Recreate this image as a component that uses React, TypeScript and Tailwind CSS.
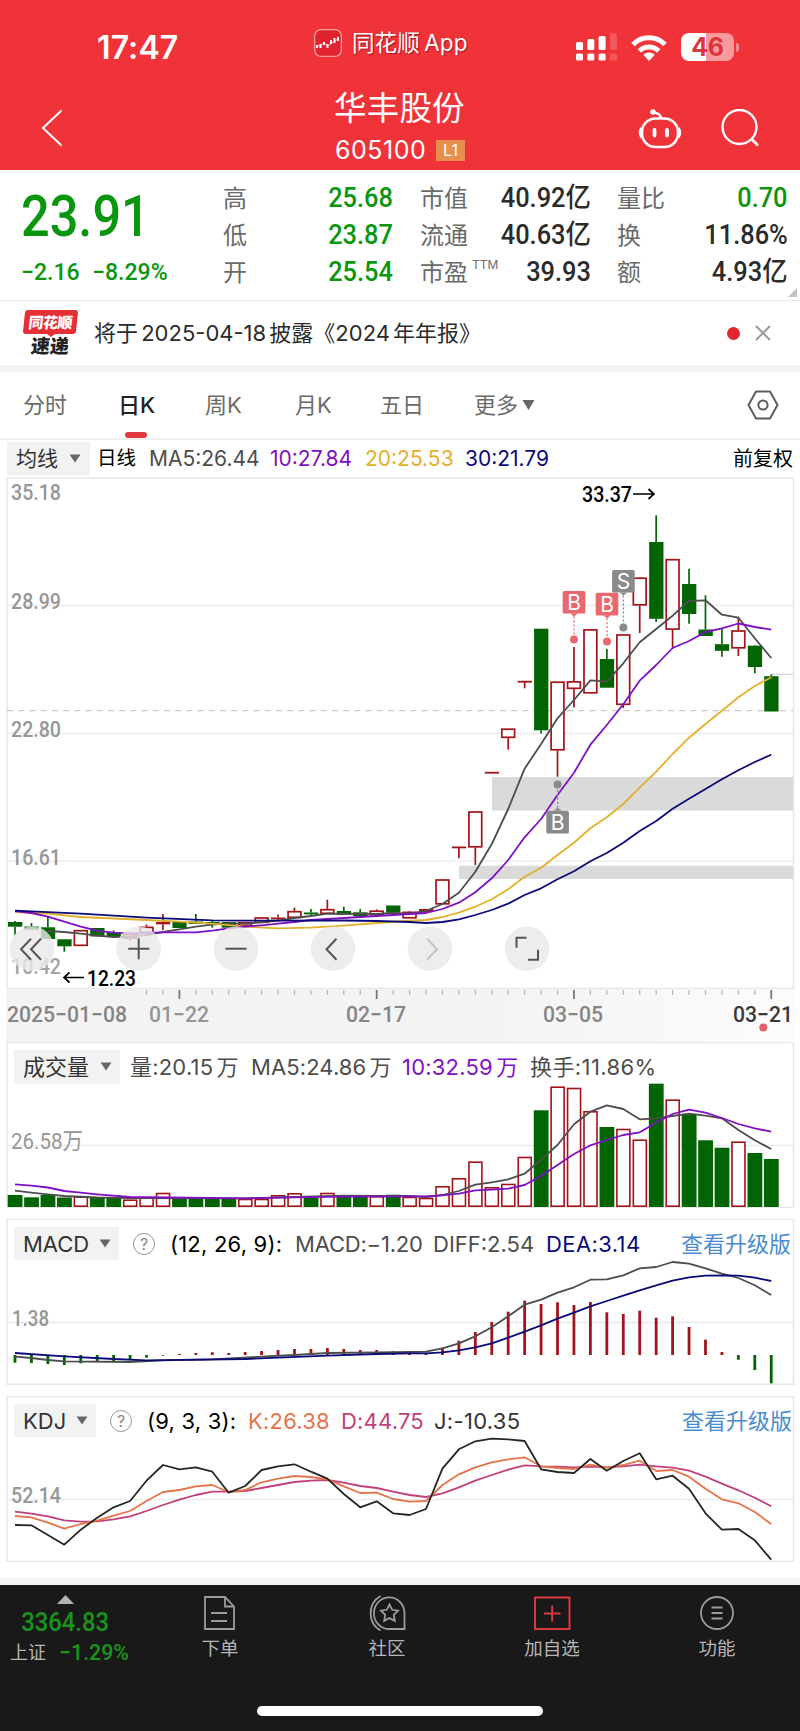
import type { ReactNode } from 'react';

// One slot per trading day, 47 days from 2025-01-08 to 03-21
const STEP = 16.44;
const dayX = (i: number) => 15 + i * STEP;

const RED = '#a3131a';
const GREEN = '#026402';
const MA5 = '#4d4d4d';
const MA10 = '#8010c4';
const MA20 = '#e3b02c';
const MA30 = '#0a0a78';

// [up, bodyTop, bodyBottom, high, low]
type Candle = [boolean, number, number, number, number];

const candles: Candle[] = [
  [false, 922, 926.7, 921, 934.7],
  [false, 926.5, 929.7, 923, 929.7],
  [false, 927.3, 939, 917, 939],
  [false, 939.3, 946.3, 939, 951.7],
  [true, 930, 946, 930, 946],
  [false, 928, 936.5, 928, 936.5],
  [false, 932, 936, 930.5, 937],
  [true, 934, 938.7, 932, 941],
  [true, 926.7, 933, 924.5, 933],
  [true, 922, 924.3, 914, 930],
  [false, 922, 928, 922, 928],
  [false, 921.5, 924, 914, 924],
  [false, 922, 924.3, 921, 927.7],
  [false, 922, 927.7, 922, 927.7],
  [true, 922, 926, 922, 926],
  [true, 917.3, 923, 917.3, 923],
  [true, 917.5, 919.3, 914.5, 921.5],
  [true, 911, 918, 907.5, 918],
  [false, 912.5, 914.3, 909, 916.3],
  [true, 909, 914, 899.7, 914],
  [false, 911, 914.7, 906.7, 915],
  [false, 912.3, 916.3, 909, 916.3],
  [true, 910.5, 915.5, 909.3, 916],
  [false, 905.5, 912.7, 905.5, 912.7],
  [true, 911.7, 918.5, 911, 918.5],
  [true, 909, 912, 909, 912],
  [true, 879.3, 904.5, 879.3, 904.5],
  [true, 846.5, 847.5, 846.5, 858.3],
  [true, 811.3, 847.5, 811.3, 865],
  [true, 771.8, 772.8, 771.8, 772.8],
  [true, 728.5, 738, 728.5, 749.7],
  [true, 680.8, 681.8, 680.8, 688.3],
  [false, 628.7, 730.3, 628.7, 733.5],
  [true, 681.5, 750.5, 681.5, 776.7],
  [true, 681.2, 689, 647, 707.5],
  [true, 629.2, 693.5, 629.2, 693.5],
  [false, 659, 687.7, 649, 687.7],
  [true, 634.3, 705, 634.3, 708],
  [true, 577.5, 605.5, 577.5, 633],
  [false, 542, 618.8, 515.3, 622],
  [true, 559, 629.8, 559, 648],
  [false, 584, 614, 568.7, 623.7],
  [false, 629.5, 636, 595.3, 636],
  [false, 644.2, 650.8, 628.3, 656.7],
  [true, 630.3, 648.5, 616.7, 656],
  [false, 645.7, 667, 645, 673.3],
  [false, 676.2, 711.5, 674.3, 711.5],
];

const volumeTops = [
  1195, 1197.3, 1195, 1197.5, 1196.7, 1198, 1197.5, 1199.7, 1197.7, 1193, 1198, 1198, 1198, 1198, 1199, 1199,
  1195.3, 1193.3, 1198, 1193, 1195, 1196, 1196.3, 1194.7, 1197, 1198, 1186.3, 1178.3, 1161.7, 1187.3, 1184, 1157,
  1110.3, 1086.7, 1088, 1111.3, 1127, 1129, 1139.7, 1083.7, 1099.7, 1114.3, 1140.3, 1147.7, 1141.7, 1153, 1159,
];

const macdEnds = [
  1362.7, 1363, 1364, 1365, 1363.3, 1361.7, 1361, 1359.3, 1357.7, 1355.7, 1354, 1353, 1352.3, 1353, 1352, 1351, 1350,
  1349, 1349, 1348, 1349, 1350, 1350, 1351.3, 1353.3, 1353.3, 1347.7, 1340.7, 1332, 1322, 1311.7, 1300.7, 1304,
  1302.3, 1305, 1302, 1312.3, 1314, 1310.7, 1317.7, 1316.3, 1327, 1339.7, 1352, 1359.7, 1370, 1383.3,
];

type Point = [number, number];

// Sparse [day, y] pairs followed by one y per day up to the last day
const trace = (head: Point[], tail: number[]) => {
  const start = 47 - tail.length;
  const all = [...head, ...tail.map((y, i): Point => [start + i, y])];
  return all.map(([i, y]) => `${dayX(i).toFixed(1)},${y}`).join(' ');
};

const priceMa5 = trace([[2, 931], [3, 932], [4, 933.7], [5, 935.7], [6, 937], [7, 936.7], [8, 935], [9, 932], [10, 929.3], [11, 926.7], [12, 924.7], [13, 923.3], [14, 923.7], [15, 922.3], [16, 920.7], [17, 918], [18, 916], [19, 913.7], [22, 914], [23, 913]], [
  913.7, 911, 904, 892.7, 871.7, 844, 809, 768.7, 744, 718.3, 700, 680.3, 681.7, 663.3, 642.3, 629, 615.7, 601, 600.3,
  614.7, 617.7, 638.3, 658,
]);
const priceMa10 = trace([[0, 911], [1, 913], [2, 916.7], [3, 921.7], [4, 926.7], [5, 930.7], [6, 932.7], [7, 933.3], [9, 932.3], [11, 932.3], [12, 930.7], [13, 928.3], [14, 926.7], [15, 925.3], [16, 923.7], [17, 922], [18, 920], [19, 919], [20, 918], [21, 917], [22, 916], [23, 915]], [
  914, 913, 909, 902.7, 892.3, 878.3, 860, 837.3, 819, 795, 772.7, 744.7, 725, 704.3, 680.7, 665, 648, 641, 632,
  628.3, 623.5, 627, 629.7,
]);
const priceMa20 = trace([[0, 912], [2, 913.7], [4, 917], [8, 920], [10, 921.7], [12, 923.7], [14, 926.7], [16, 928.3], [18, 927.7], [20, 925.7], [22, 923]], [
  920.7, 920, 917, 912.7, 906.7, 899.3, 889.3, 876.7, 867.7, 855, 842.7, 828.3, 817.3, 804, 787.7, 771.7, 754, 737.7,
  724, 710.7, 697.3, 686, 677.3,
]);
const priceMa30 = trace([[0, 910.7], [4, 913.7], [8, 917.7], [12, 920.3], [16, 920.7], [20, 920.5], [22, 921]], [
  922, 923, 922, 919.3, 915, 910, 903.7, 895, 888.3, 879.3, 871.3, 861.3, 853, 842.7, 831, 821, 808.7, 798.7, 789,
  779.3, 770.3, 762, 754.7,
]);
const volMa5 = trace([[0, 1190.7], [1, 1192.7], [2, 1194.3], [3, 1196], [5, 1197.5], [7, 1198], [14, 1198.3], [17, 1197], [20, 1195.7], [22, 1196]], [
  1196, 1197, 1195, 1191, 1184.7, 1182.3, 1179.3, 1173.7, 1159.7, 1145, 1124.3, 1111.7, 1105.3, 1109, 1119.3, 1118.3,
  1116, 1113.7, 1115.7, 1118.3, 1130, 1140.3, 1149,
]);
const volMa10 = trace([[0, 1184.3], [1, 1185.7], [2, 1187.5], [3, 1191], [4, 1192.7], [5, 1194.3], [6, 1195.7], [7, 1197], [14, 1198.3], [17, 1197.3], [20, 1196.7], [23, 1196.3]], [
  1196.3, 1196.3, 1195.3, 1193.7, 1190.3, 1189.7, 1188.7, 1185, 1176, 1165, 1154, 1145.3, 1140, 1135, 1132.3, 1122.7,
  1114, 1109.7, 1112.7, 1118, 1124, 1128.3, 1131.7,
]);
const diff = trace([[0, 1356.7], [1, 1358], [2, 1360], [3, 1361.3], [7, 1362], [9, 1360.3], [12, 1359.3], [15, 1356.7], [17, 1355], [19, 1353], [22, 1352.3]], [
  1352, 1351.7, 1348.3, 1343.3, 1336.3, 1327.3, 1316.3, 1304.7, 1299.7, 1292.7, 1287.3, 1279.7, 1279.3, 1275.3,
  1268.3, 1267, 1262, 1263.7, 1268.3, 1273.7, 1278, 1285.3, 1295,
]);
const dea = trace([[0, 1353], [3, 1356.3], [6, 1359], [8, 1360.3], [14, 1359], [19, 1355.7], [22, 1354]], [
  1353.3, 1353.3, 1352.3, 1350.3, 1347.3, 1343.3, 1337.7, 1331.7, 1325.3, 1318.7, 1312.7, 1306.3, 1301, 1295.7,
  1290.3, 1285.3, 1280.7, 1277.3, 1275.7, 1275.3, 1275.7, 1277.7, 1281,
]);
const kdjJ = trace([], [
  1525, 1525.3, 1535, 1544.7, 1529.7, 1517.7, 1507.3, 1501, 1480.7, 1465, 1469.3, 1467.3, 1471.7, 1492.7, 1486, 1470,
  1466.3, 1464.3, 1471.7, 1478.7, 1494, 1507.3, 1501.3, 1513.3, 1515, 1509, 1468.7, 1449.3, 1441.3, 1438.7, 1439.3,
  1441, 1469.3, 1472, 1473, 1459, 1470.7, 1461, 1453.3, 1479.3, 1475.7, 1488.7, 1513.3, 1529.7, 1529, 1540.3, 1559.7,
]);
const kdjK = trace([], [
  1516, 1517.3, 1522.7, 1528.7, 1524, 1520.7, 1515.7, 1511, 1501, 1492, 1490, 1486.3, 1485, 1492.3, 1490, 1482.3,
  1478.7, 1476, 1477, 1479.3, 1486.3, 1493, 1492.7, 1499, 1501.7, 1501, 1485, 1474.3, 1467.3, 1462.3, 1459.3, 1457.3,
  1466.3, 1468, 1469, 1464.7, 1467.7, 1465, 1460.7, 1471, 1470, 1476.7, 1488.7, 1499.3, 1503.3, 1512, 1524,
]);
const kdjD = trace([], [
  1511.7, 1513.7, 1516.3, 1520.3, 1521.7, 1521.3, 1519.3, 1516.3, 1511, 1505, 1499.7, 1495, 1491.7, 1491.7, 1491,
  1488, 1485, 1482, 1480.7, 1480, 1482.7, 1486, 1488, 1491.7, 1495, 1497, 1493.3, 1487.3, 1480.7, 1475, 1469.7,
  1465.3, 1466.3, 1466.7, 1467.3, 1466.7, 1467.3, 1466.3, 1464.7, 1466.3, 1467.7, 1470.7, 1476.7, 1483.7, 1490.3,
  1497.7, 1506.3,
]);

const Trace = ({ points, color }: { points: string; color: string }) => (
  <polyline points={points} fill="none" stroke={color} strokeWidth="1.8" strokeLinejoin="round" />
);

interface LabelProps {
  x: number;
  y: number;
  width: number;
  size?: number;
  color?: string;
  weight?: number;
  children: string;
}

// Chart label, squeezed to the narrow numerals used on the axes
const Label = ({ x, y, width, size = 22.5, color = '#979797', weight = 500, children }: LabelProps) => (
  <text
    x={x}
    y={y}
    textLength={width}
    lengthAdjust="spacingAndGlyphs"
    fontSize={size}
    fill={color}
    fontWeight={weight}
    fontFamily="Roboto, 'Noto Sans CJK SC', sans-serif"
  >
    {children}
  </text>
);

const Grid = ({ y }: { y: number }) => <line x1="8" x2="793" y1={y} y2={y} stroke="#e9e9e9" strokeWidth="1.3" />;

const Frame = ({ y, height }: { y: number; height: number }) => (
  <rect x="7" y={y} width="786.5" height={height} fill="none" stroke="#e7e7e7" strokeWidth="1.5" />
);

interface MarkerProps {
  x: number;
  top: number;
  dotY: number;
  color: string;
  letter: string;
}

const Marker = ({ x, top, dotY, color, letter }: MarkerProps) => {
  const below = dotY < top;
  const edge = below ? top : top + 22.5;
  const tip = below ? edge - 3 : edge + 3;
  return (
    <g>
      <circle cx={x} cy={dotY} r="4" fill={color} />
      <line x1={x} x2={x} y1={tip} y2={dotY} stroke={color} strokeWidth="1.3" strokeDasharray="2 2" />
      <rect x={x - 11.3} y={top} width="22.6" height="22.6" rx="1.5" fill={color} />
      <path d={`M${x - 4} ${edge}L${x} ${tip}L${x + 4} ${edge}z`} fill={color} />
      <text x={x} y={top + 19} textAnchor="middle" fontSize="21" fill="#fff" fontFamily="Inter, sans-serif">
        {letter}
      </text>
    </g>
  );
};

const ToolButton = ({ x, children, faded }: { x: number; children: ReactNode; faded?: boolean }) => (
  <g transform={`translate(${x} 948.7)`} fill="none" stroke={faded ? '#c4c4c4' : '#555'} strokeWidth="2">
    <circle r="22.3" fill="#e9e9e9" fillOpacity="0.8" stroke="none" />
    {children}
  </g>
);

const PriceChart = () => (
  <svg viewBox="0 477 800 512" className="block h-[512px] w-[800px]">
    <Frame y={478} height={510.5} />
    <Grid y={605.4} />
    <Grid y={733.4} />
    <Grid y={861.2} />
    <rect x="492" y="777" width="301" height="33.5" fill="#dadada" />
    <rect x="459" y="865.7" width="334" height="13.3" fill="#dadada" />
    <line x1="7" x2="793" y1="710.6" y2="710.6" stroke="#cfcbbb" strokeWidth="1.3" strokeDasharray="6.2 5" />
    <line x1="772" x2="793" y1="674.3" y2="674.3" stroke="#d6d6d6" strokeWidth="1.3" />
    <Label x={11} y={500} width={50}>35.18</Label>
    <Label x={11} y={609} width={50}>28.99</Label>
    <Label x={11} y={737} width={50}>22.80</Label>
    <Label x={11} y={864.7} width={50}>16.61</Label>
    <Label x={11} y={973.5} width={50} color="#a3a3a3">10.42</Label>
    {candles.map(([up, top, bottom, high, low], i) => {
      const x = dayX(i);
      const color = up ? RED : GREEN;
      const height = bottom - top;
      return (
        <g key={i} stroke={color} strokeWidth="1.7">
          {high < top && <line x1={x} x2={x} y1={high} y2={top} />}
          {low > bottom && <line x1={x} x2={x} y1={bottom} y2={low} />}
          {up && height > 3 ? (
            <rect x={x - 6.4} y={top + 0.7} width="12.8" height={height - 1.4} fill="#fff" />
          ) : (
            <rect x={x - 7} y={top} width="14.3" height={Math.max(height, 1.8)} fill={color} stroke="none" />
          )}
        </g>
      );
    })}
    <Trace points={priceMa5} color={MA5} />
    <Trace points={priceMa20} color={MA20} />
    <Trace points={priceMa10} color={MA10} />
    <Trace points={priceMa30} color={MA30} />
    <Marker x={574} top={591} dotY={639.6} color="#e8686d" letter="B" />
    <Marker x={607} top={592.8} dotY={641.5} color="#e8686d" letter="B" />
    <Marker x={623.4} top={570} dotY={627.4} color="#8a8a8a" letter="S" />
    <Marker x={557.6} top={810.8} dotY={784.5} color="#8a8a8a" letter="B" />
    <Label x={582} y={502} width={50} size={22} color="#000">33.37</Label>
    <path d="M633 494h21M648.5 489l5.5 5-5.5 5" fill="none" stroke="#000" strokeWidth="1.7" />
    <Label x={87} y={985.5} width={49} size={22} color="#000">12.23</Label>
    <path d="M84 977.5H64M69.5 972.5l-5.5 5 5.5 5" fill="none" stroke="#000" strokeWidth="1.7" />
    <ToolButton x={32}>
      <path d="M-1 -10l-10 10.5 10 10.5M9 -10l-10 10.5 10 10.5" />
    </ToolButton>
    <ToolButton x={138.7}>
      <path d="M-10.5 0h21M0 -10.5v21" />
    </ToolButton>
    <ToolButton x={236}>
      <path d="M-10.5 0h21" />
    </ToolButton>
    <ToolButton x={333}>
      <path d="M3.5 -10l-10 10.5 10 10.5" />
    </ToolButton>
    <ToolButton x={430} faded>
      <path d="M-3 -10l10 10.5-10 10.5" />
    </ToolButton>
    <ToolButton x={527}>
      <path d="M-10.5 -1v-10h10M11 1v10h-10" />
    </ToolButton>
  </svg>
);

const TimeAxis = () => (
  <div className="bg-gradient-to-r from-[#f3f3f3] from-60% to-[#fcfcfc]">
    <svg viewBox="0 989 800 53" className="block h-[53px] w-[800px]">
      <rect x="0" y="989" width="6.3" height="53" fill="#fff" />
      <rect x="794" y="989" width="6" height="53" fill="#fff" />
      {Array.from({ length: 39 }, (_, n) => n + 8).map((i) => {
        const major = i % 12 === 10;
        return (
          <line
            key={i}
            x1={dayX(i)}
            x2={dayX(i)}
            y1="990"
            y2={major ? 999 : 995}
            stroke={major ? '#777' : '#b5b5b5'}
            strokeWidth={major ? 1.8 : 1.2}
          />
        );
      })}
      <Label x={7} y={1022} width={120} color="#858585">2025−01−08</Label>
      <Label x={149} y={1022} width={60} color="#959595">01−22</Label>
      <Label x={346} y={1022} width={60} color="#858585">02−17</Label>
      <Label x={543} y={1022} width={60} color="#858585">03−05</Label>
      <Label x={733} y={1022} width={60} color="#3a3a3a">03−21</Label>
      <circle cx="763.3" cy="1027.6" r="4" fill="#e26068" />
    </svg>
  </div>
);

const VolumeChart = () => (
  <svg viewBox="0 1042 800 166" className="block h-[166px] w-[800px]">
    <Frame y={1042.5} height={165} />
    <Grid y={1145.4} />
    <Label x={11} y={1149} width={72} weight={400}>26.58万</Label>
    {volumeTops.map((top, i) =>
      candles[i][0] ? (
        <rect key={i} x={dayX(i) - 6.4} y={top + 0.5} width="13" height={1205.7 - top} fill="#fff" stroke={RED} strokeWidth="1.6" />
      ) : (
        <rect key={i} x={dayX(i) - 7.3} y={top} width="14.8" height={1207 - top} fill={GREEN} />
      ),
    )}
    <Trace points={volMa5} color={MA5} />
    <Trace points={volMa10} color={MA10} />
  </svg>
);

const MacdChart = () => (
  <svg viewBox="0 1219 800 166" className="block h-[166px] w-[800px]">
    <Frame y={1219.3} height={165} />
    <Grid y={1322.5} />
    <Label x={12} y={1325.5} width={37}>1.38</Label>
    {macdEnds.map((y, i) => (
      <line key={i} x1={dayX(i)} x2={dayX(i)} y1={1355} y2={y} stroke={y < 1355 ? RED : GREEN} strokeWidth="2.8" />
    ))}
    <Trace points={diff} color={MA5} />
    <Trace points={dea} color={MA30} />
  </svg>
);

const KdjChart = () => (
  <svg viewBox="0 1396 800 166" className="block h-[166px] w-[800px]">
    <Frame y={1396.7} height={164.7} />
    <Grid y={1499.7} />
    <Label x={11} y={1502.5} width={50}>52.14</Label>
    <Trace points={kdjD} color="#c1407c" />
    <Trace points={kdjK} color="#e5744a" />
    <Trace points={kdjJ} color="#262626" />
  </svg>
);

const Dropdown = ({ className, children }: { className: string; children: ReactNode }) => (
  <div className={`flex shrink-0 items-center bg-[#f2f2f2] text-[#333] ${className}`}>
    <span className="flex-1 whitespace-nowrap">{children}</span>
    <svg viewBox="0 0 12 9" className="h-[9px] w-3">
      <path d="M0.5 0.5h11L6 8.5z" fill="#666" />
    </svg>
  </div>
);

const Help = ({ className }: { className: string }) => (
  <span className={`flex h-[22px] w-[22px] shrink-0 items-center justify-center rounded-full border-[1.5px] border-[#999] text-[16px] leading-none text-[#888] ${className}`}>
    ?
  </span>
);

// Indicator panel: the header lies over the plot area
const Panel = ({ header, children }: { header: ReactNode; children: ReactNode }) => (
  <section className="relative">
    {children}
    <div className="absolute inset-x-0 top-0 flex h-[49px] items-center pl-[14px] text-[22px] leading-none text-[#4d4d4d]">
      {header}
    </div>
  </section>
);

const Value = ({ className, children }: { className: string; children: ReactNode }) => (
  <span className={`shrink-0 whitespace-nowrap ${className}`}>{children}</span>
);

const StatusBar = () => (
  <div className="flex h-[86px] items-center">
    <span className="ml-[97px] w-[217px] pt-[10px] font-[Inter] text-[32px] font-semibold leading-none tracking-[0.1px]">17:47</span>
    <svg viewBox="0 0 28 28" className="h-7 w-7">
      <rect x="0.7" y="0.7" width="26.6" height="26.6" rx="6" fill="#df2430" stroke="#f89b9b" strokeWidth="1.3" />
      <path d="M3 16v3M6.5 15v4M10 13v3M13.500 15v4M17 11v4M20.5 9v5M24 8v4" stroke="#fff" strokeWidth="2" />
      <path d="M2 18l8-4 4 3 11-8" fill="none" stroke="#fff" strokeWidth="0.6" />
    </svg>
    <span className="ml-[10px] w-[224px] text-[22.5px] leading-none tracking-[0.1px] [text-shadow:1px_1px_1px_rgba(90,0,0,0.5)] [word-spacing:-2px]">同花顺 App</span>
    <svg viewBox="0 0 41 28" className="mt-[8px] h-7 w-[41px]">
      <g fill="#fff">
        <rect x="0" y="9" width="7" height="8" rx="1.5" />
        <rect x="11.3" y="6" width="7" height="11" rx="1.5" />
        <rect x="22.6" y="3" width="7" height="14" rx="1.5" />
        <rect x="0" y="20.5" width="7" height="7" rx="1.5" />
        <rect x="11.3" y="20.5" width="7" height="7" rx="1.5" />
        <rect x="22.6" y="20.5" width="7" height="7" rx="1.5" />
        <g opacity="0.18">
          <rect x="34" y="0" width="7" height="17" rx="1.5" />
          <rect x="34" y="20.5" width="7" height="7" rx="1.5" />
        </g>
      </g>
    </svg>
    <svg viewBox="0 0 36 27" className="ml-[14px] mt-[8px] h-[27px] w-9">
      <g fill="none" stroke="#fff" strokeWidth="5">
        <path d="M2 10.5a22.5 22.5 0 0 1 32 0" />
        <path d="M8.3 17a13.7 13.7 0 0 1 19.4 0" />
      </g>
      <path d="M18 27l-5.800-6.200a8.400 8.400 0 0 1 11.600 0z" fill="#fff" />
    </svg>
    <div className="ml-[14px] mt-[8px] flex h-7 w-[53px] items-center justify-center rounded-lg bg-linear-to-r from-white from-47% to-[#f89a9d] to-47% font-[Inter] text-[25px] font-bold leading-none tracking-[-0.3px] text-[#d9363d]">
      46
    </div>
    <div className="ml-[2px] mt-[8px] h-[9px] w-[3px] rounded-r-full bg-[#f6888c]" />
  </div>
);

const TitleBar = () => (
  <div className="flex h-[84px] items-start text-white">
    <svg viewBox="0 0 22 38" className="ml-[41px] mt-[23px] h-[38px] w-[22px]">
      <path d="M20.5 1.5L2 19l18.5 17.5" fill="none" stroke="#fff" strokeWidth="2" />
    </svg>
    <div className="ml-[271px] w-[304px]">
      <h1 className="mt-[7px] whitespace-nowrap text-[32.5px] leading-8 tracking-[0.2px]">华丰股份</h1>
      <div className="mt-[13px] flex items-center">
        <span className="w-[102px] pl-px font-[Inter] text-[25px] leading-6 tracking-[0.5px]">605100</span>
        <span className="h-[21px] w-[29px] bg-[#e78f4c] text-center font-[Inter] text-[16px] leading-[21px]">L1</span>
      </div>
    </div>
    <svg viewBox="0 0 44 41" className="mt-[22px] h-[41px] w-11">
      <g fill="none" stroke="#fff" strokeWidth="2.5">
        <rect x="4" y="10.500" width="36" height="28.500" rx="13.500" />
        <path d="M3.5 20q-3 4.500 0 9.500M40.500 20q3 4.500 0 9.500" />
        <path d="M23 11q0-6-8-6.500" />
        <path d="M16.500 22v5.500M29 22v5.500" strokeWidth="3.800" strokeLinecap="round" />
      </g>
      <circle cx="15" cy="4" r="2.800" fill="#fff" />
    </svg>
    <svg viewBox="0 0 38 38" className="ml-[39px] mt-[23px] h-[38px] w-[38px]">
      <circle cx="18.5" cy="18" r="17" fill="none" stroke="#fff" strokeWidth="2.400" />
      <path d="M30 29.500l7 7" stroke="#fff" strokeWidth="2.600" />
    </svg>
  </div>
);

interface QuoteProps {
  name: ReactNode;
  value: string;
  className?: string;
}

const Quote = ({ name, value, className = 'text-[#2b2b2b]' }: QuoteProps) => (
  <div className="flex h-[37px] items-center justify-between whitespace-nowrap">
    <span className="text-[24px] leading-none text-[#6a6a6a]">{name}</span>
    <span className={`origin-right scale-x-[0.94] font-[Roboto,'Noto_Sans_CJK_SC',sans-serif] text-[27px] font-medium leading-none ${className}`}>{value}</span>
  </div>
);

const Quotes = () => (
  <section className="flex h-[131px] items-start border-b border-[#e8e8e8]">
    <div className="ml-[21px] w-[202px] text-[#0a960f]">
      <div className="mt-[17px] origin-left scale-x-[0.87] font-[Roboto] text-[58px] font-medium leading-[58px]">23.91</div>
      <div className="mt-[15px] flex origin-left scale-x-[0.96] font-[Roboto] text-[24px] font-medium leading-6">
        <span className="w-[74px]">−2.16</span>
        <span>−8.29%</span>
      </div>
    </div>
    <div className="mt-[10px] w-[170px]">
      <Quote name="高" value="25.68" className="text-[#0a960f]" />
      <Quote name="低" value="23.87" className="text-[#0a960f]" />
      <Quote name="开" value="25.54" className="text-[#0a960f]" />
    </div>
    <div className="ml-[27px] mt-[10px] w-[171px]">
      <Quote name="市值" value="40.92亿" />
      <Quote name="流通" value="40.63亿" />
      <Quote name={<>市盈<sup className="relative -top-3 ml-1 align-baseline text-[12px] leading-none">TTM</sup></>} value="39.93" />
    </div>
    <div className="ml-[26px] mt-[10px] w-[171px]">
      <Quote name="量比" value="0.70" className="text-[#0a960f]" />
      <Quote name="换" value="11.86%" />
      <Quote name="额" value="4.93亿" />
    </div>
    <svg viewBox="0 0 9 9" className="mt-[118px] h-[9px] w-[9px]">
      <path d="M9 0v9H0z" fill="#c4c4c4" />
    </svg>
  </section>
);

const NewsBar = () => (
  <section className="flex h-[64px] items-center">
    <div className="ml-[23px] flex w-[55px] flex-col items-center">
      <div className="flex h-[24px] w-[53px] -skew-x-6 items-center justify-center rounded-[3px] bg-[#e52f35] text-[15px] font-black leading-none tracking-[-0.5px] text-white">同花顺</div>
      <svg viewBox="0 0 8 3" className="h-[3px] w-2">
        <path d="M0 0h8L4 3z" fill="#e52f35" />
      </svg>
      <div className="-skew-x-6 text-[19px] font-black leading-[19px] text-[#222]">速递</div>
    </div>
    <span className="ml-[16px] w-[633px] whitespace-nowrap text-[22px] leading-none text-[#2b2b2b] [word-spacing:-3px]">
      将于 2025-04-18 披露《2024 年年报》
    </span>
    <span className="h-[13px] w-[13px] rounded-full bg-[#e3262d]" />
    <svg viewBox="0 0 16 16" className="ml-[15px] h-4 w-4">
      <path d="M1 1l14 14M15 1L1 15" stroke="#949494" strokeWidth="1.8" />
    </svg>
  </section>
);

const Tabs = () => (
  <nav className="flex h-[68px] items-center border-b-2 border-[#efefef] text-[22px] leading-none text-[#6b6b6b]">
    <span className="ml-[23px] w-[95px]">分时</span>
    <span className="relative flex h-full w-[87px] items-center font-medium text-[#222]">
      日K
      <i className="absolute bottom-0 left-[7px] h-[6px] w-[22px] rounded-sm bg-[#e23b3f]" />
    </span>
    <span className="w-[90px]">周K</span>
    <span className="w-[85px]">月K</span>
    <span className="w-[94px]">五日</span>
    <span className="w-[48px]">更多</span>
    <svg viewBox="0 0 12 10" className="h-[10px] w-[13px]">
      <path d="M0 0h12L6 10z" fill="#666" />
    </svg>
    <svg viewBox="0 0 32 30" className="ml-[212px] h-[30px] w-8">
      <path d="M9 1.5h14L30.5 15 23 28.500H9L1.5 15z" fill="none" stroke="#5c5c5c" strokeWidth="2" strokeLinejoin="round" />
      <circle cx="16" cy="15" r="4.600" fill="none" stroke="#5c5c5c" strokeWidth="2" />
    </svg>
  </nav>
);

const MaLegend = () => (
  <div className="flex h-[37px] items-center pl-[7px] text-[21px] leading-none">
    <Dropdown className="h-[33px] w-[83px] pl-[9px] pr-[9px]">均线</Dropdown>
    <Value className="ml-[7px] w-[52px] text-[19.5px] text-black">日线</Value>
    <Value className="w-[121px] text-[#4d4d4d]">MA5:26.44</Value>
    <Value className="w-[95px] text-[#8010c4]">10:27.84</Value>
    <Value className="w-[100px] text-[#e3b02c]">20:25.53</Value>
    <Value className="w-[268px] text-[#0a0a78]">30:21.79</Value>
    <Value className="text-[20px] text-black">前复权</Value>
  </div>
);

const NavItem = ({ label, className, children }: { label: string; className: string; children: ReactNode }) => (
  <div className={`flex flex-col items-center ${className}`}>
    <svg viewBox="0 0 38 36" className="mt-[10px] h-9 w-[38px]" fill="none" stroke="#9c9c9c" strokeWidth="1.8">
      {children}
    </svg>
    <span className="mt-[8px] text-[18.5px] leading-[19px] text-[#b5b5b5]">{label}</span>
  </div>
);

const BottomBar = () => (
  <footer className="h-[146px] bg-[#191919]">
    <div className="flex h-[121px] items-start">
      <div className="flex w-[131px] flex-col items-center text-[#17961c]">
        <svg viewBox="0 0 17 9" className="mt-[10px] h-[9px] w-[17px]">
          <path d="M8.5 0L17 9H0z" fill="#b5b5b5" />
        </svg>
        <span className="mt-[6px] scale-x-[0.95] font-[Roboto] text-[25px] font-medium leading-[25px]">3364.83</span>
        <div className="mt-[8px] flex w-[131px] items-center pl-[10px]">
          <span className="w-[50px] text-[18px] leading-[20px] text-[#b5b5b5]">上证</span>
          <span className="origin-left scale-x-[0.97] font-[Roboto] text-[22px] font-medium leading-[20px]">−1.29%</span>
        </div>
      </div>
      <NavItem label="下单" className="ml-[69px] w-10">
        <path d="M4 2h20l9 9.5V34H4zM24 2v9.5h9M10 18h16M10 26h16" />
      </NavItem>
      <NavItem label="社区" className="ml-[127px] w-10">
        <path d="M36.500 34H22A15.300 15.800 0 1 1 36.500 18.500zM12.500 1a20 20 0 0 0 0 34.500" />
        <path d="M21.500 9.500l2.700 5.300 5.800.9-4.200 4.200 1 5.900-5.300-2.700-5.300 2.700 1-5.900-4.200-4.200 5.800-.9z" />
      </NavItem>
      <NavItem label="加自选" className="ml-[116px] w-[58px]">
        <path d="M2 2.500h34.500v31.500H2zM19.200 10.500v16M11 18.500h16.500" stroke="#d8383f" strokeWidth="2" />
      </NavItem>
      <NavItem label="功能" className="ml-[116px] w-10">
        <circle cx="19" cy="18" r="16" />
        <path d="M13.500 12.500h11M13.500 18h11M13.500 23.500h11" strokeWidth="2.200" />
      </NavItem>
    </div>
    <div className="mx-auto h-[10px] w-[286px] rounded-full bg-white" />
  </footer>
);

export default function App() {
  return (
    <main className="h-[1731px] w-[800px] overflow-hidden bg-white font-[Inter,'Noto_Sans_CJK_SC',sans-serif]">
      <header className="h-[170px] bg-[#f03239] text-white">
        <StatusBar />
        <TitleBar />
      </header>
      <Quotes />
      <NewsBar />
      <div className="h-[7px] bg-[#f4f4f4]" />
      <Tabs />
      <MaLegend />
      <PriceChart />
      <TimeAxis />
      <Panel
        header={
          <>
            <Dropdown className="h-[34px] w-[106px] pl-[9px] pr-[8px]">成交量</Dropdown>
            <Value className="ml-[10px] w-[121px] tracking-[0.2px] [word-spacing:-3px]">量:20.15 万</Value>
            <Value className="w-[151px] tracking-[0.1px] [word-spacing:-3px]">MA5:24.86 万</Value>
            <Value className="w-[128px] tracking-[0.2px] text-[#8010c4] [word-spacing:-3px]">10:32.59 万</Value>
            <Value className="tracking-[0.4px]">换手:11.86%</Value>
          </>
        }
      >
        <VolumeChart />
      </Panel>
      <div className="h-[11px]" />
      <Panel
        header={
          <>
            <Dropdown className="h-[33px] w-[105px] pl-[9px] pr-[8px]">MACD</Dropdown>
            <Help className="ml-[14px]" />
            <Value className="ml-[15px] w-[125px] tracking-[0.2px] text-black">(12, 26, 9):</Value>
            <Value className="w-[138px] tracking-[-0.2px]">MACD:−1.20</Value>
            <Value className="w-[113px]">DIFF:2.54</Value>
            <Value className="w-[135px] tracking-[0.4px] text-[#0a0a78]">DEA:3.14</Value>
            <Value className="text-[#4a8cd0]">查看升级版</Value>
          </>
        }
      >
        <MacdChart />
      </Panel>
      <div className="h-[11px]" />
      <Panel
        header={
          <>
            <Dropdown className="h-[33px] w-[82px] pl-[9px] pr-[8px]">KDJ</Dropdown>
            <Help className="ml-[14px]" />
            <Value className="ml-[15px] w-[101px] tracking-[0.2px] text-black">(9, 3, 3):</Value>
            <Value className="w-[93px] tracking-[0.2px] text-[#e5744a]">K:26.38</Value>
            <Value className="w-[93px] tracking-[0.2px] text-[#c1407c]">D:44.75</Value>
            <Value className="w-[248px] tracking-[0.3px] text-[#333]">J:-10.35</Value>
            <Value className="text-[#4a8cd0]">查看升级版</Value>
          </>
        }
      >
        <KdjChart />
      </Panel>
      <div className="mt-[16px] h-[7px] bg-[#f4f4f4]" />
      <BottomBar />
    </main>
  );
}
